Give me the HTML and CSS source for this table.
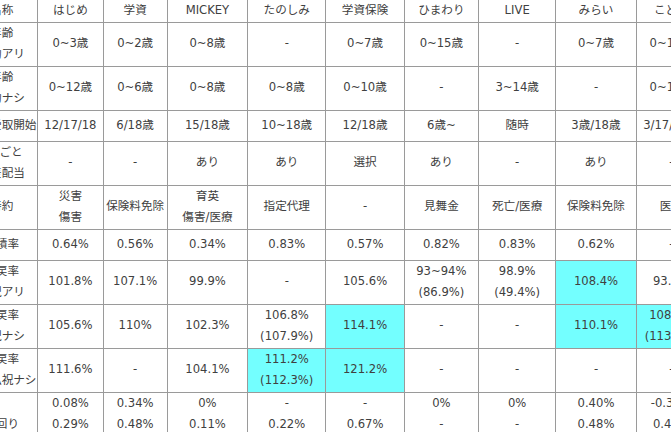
FILE: index.html
```html
<!DOCTYPE html>
<html lang="ja">
<head>
<meta charset="utf-8">
<title>学資保険 比較表</title>
<link rel="stylesheet" href="styles.css">
</head>
<body>
<table class="cmp">
  <colgroup>
    <col class="c-label">
    <col class="w65"><col class="w64"><col class="w80"><col class="w78"><col class="w78">
    <col class="w74"><col class="w77"><col class="w80"><col class="w70">
  </colgroup>
  <thead>
    <tr class="head">
      <th>名称</th><th>はじめ</th><th>学資</th><th>MICKEY</th><th>たのしみ</th><th>学資保険</th><th>ひまわり</th><th>LIVE</th><th>みらい</th><th>こども</th>
    </tr>
  </thead>
  <tbody>
    <tr>
      <th>年齢<br>特約アリ</th><td>0~3歳</td><td>0~2歳</td><td>0~8歳</td><td>-</td><td>0~7歳</td><td>0~15歳</td><td>-</td><td>0~7歳</td><td>0~12歳</td>
    </tr>
    <tr>
      <th>年齢<br>特約ナシ</th><td>0~12歳</td><td>0~6歳</td><td>0~8歳</td><td>0~8歳</td><td>0~10歳</td><td>-</td><td>3~14歳</td><td>-</td><td>0~12歳</td>
    </tr>
    <tr>
      <th>祝金受取開始</th><td>12/17/18</td><td>6/18歳</td><td>15/18歳</td><td>10~18歳</td><td>12/18歳</td><td>6歳~</td><td>随時</td><td>3歳/18歳</td><td>3/17/18歳</td>
    </tr>
    <tr>
      <th>5年ごと<br>利差配当</th><td>-</td><td>-</td><td>あり</td><td>あり</td><td>選択</td><td>あり</td><td>-</td><td>あり</td><td>-</td>
    </tr>
    <tr>
      <th>特約</th><td>災害<br>傷害</td><td>保険料免除</td><td>育英<br>傷害/医療</td><td>指定代理</td><td>-</td><td>見舞金</td><td>死亡/医療</td><td>保険料免除</td><td>医療</td>
    </tr>
    <tr>
      <th>累積率</th><td>0.64%</td><td>0.56%</td><td>0.34%</td><td>0.83%</td><td>0.57%</td><td>0.82%</td><td>0.83%</td><td>0.62%</td><td>-</td>
    </tr>
    <tr>
      <th>返戻率<br>お祝アリ</th><td>101.8%</td><td>107.1%</td><td>99.9%</td><td>-</td><td>105.6%</td><td>93~94%<br>(86.9%)</td><td>98.9%<br>(49.4%)</td><td class="hl">108.4%</td><td>93.8%</td>
    </tr>
    <tr>
      <th>返戻率<br>お祝ナシ</th><td>105.6%</td><td>110%</td><td>102.3%</td><td>106.8%<br>(107.9%)</td><td class="hl">114.1%</td><td>-</td><td>-</td><td class="hl">110.1%</td><td class="hl">108.5%<br>(113.2%)</td>
    </tr>
    <tr>
      <th>返戻率<br>一括払祝ナシ</th><td>111.6%</td><td>-</td><td>104.1%</td><td class="hl">111.2%<br>(112.3%)</td><td class="hl">121.2%</td><td>-</td><td>-</td><td>-</td><td>-</td>
    </tr>
    <tr>
      <th>利回り</th><td>0.08%<br>0.29%<br>0.41%</td><td>0.34%<br>0.48%<br>-</td><td>0%<br>0.11%<br>0.19%</td><td>-<br>0.22%<br>0.40%</td><td>-<br>0.67%<br>0.93%</td><td>0%<br>-<br>-</td><td>0%<br>-<br>-</td><td>0.40%<br>0.48%<br>-</td><td>-0.35%<br>0.42%<br>-</td>
    </tr>
  </tbody>
</table>
</body>
</html>
```
FILE: styles.css
```css
html, body {
  margin: 0;
  padding: 0;
  background: #ffffff;
  overflow: hidden;
}

.cmp {
  border-collapse: collapse;
  table-layout: fixed;
  width: 742px;
  margin-left: -35px;
  margin-top: -1px;
  font-family: "DejaVu Sans", "Noto Sans CJK JP", sans-serif;
  font-size: 11.6px;
  line-height: 21.5px;
  color: #404040;
}

.c-label { width: 72px; }
.w65 { width: 65px; }
.w64 { width: 64px; }
.w80 { width: 80px; }
.w78 { width: 78px; }
.w74 { width: 74px; }
.w77 { width: 77px; }
.w70 { width: 70px; }

.cmp th,
.cmp td {
  border: 1px solid #9a9a9a;
  padding: 0;
  text-align: center;
  vertical-align: middle;
  font-weight: normal;
  white-space: nowrap;
  height: 30px;
}

.cmp .head th {
  height: auto;
}

.cmp td.hl {
  background: #73ffff;
}
```
